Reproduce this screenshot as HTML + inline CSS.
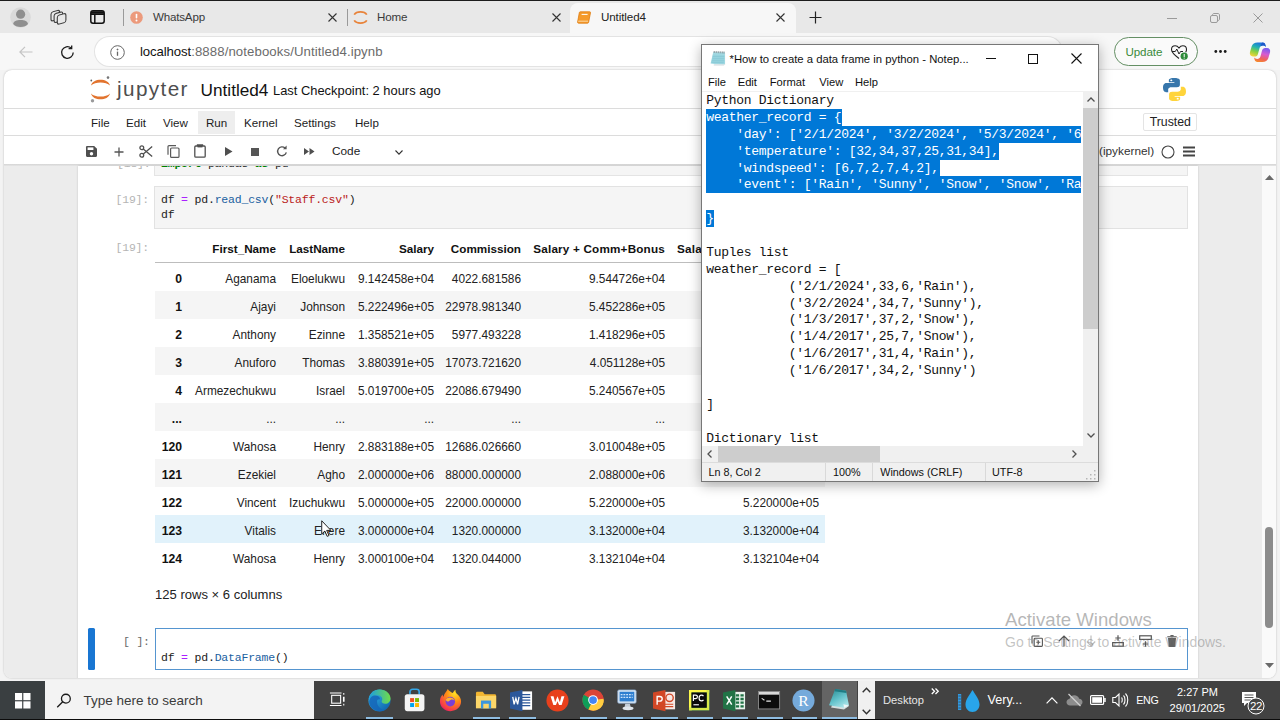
<!DOCTYPE html>
<html lang="en">
<head>
<meta charset="utf-8">
<title>Untitled4</title>
<style>
*{box-sizing:border-box;margin:0;padding:0}
html,body{width:1280px;height:720px;overflow:hidden;background:#f3f3f3;font-family:"Liberation Sans",sans-serif;color:#1a1a1a}
.abs,#root *{position:absolute}
#root{position:relative;width:1280px;height:720px;overflow:hidden}
#root span.t{white-space:nowrap;line-height:1}
#root svg{overflow:visible}
/* ---------- browser chrome ---------- */
#tabstrip{left:0;top:0;width:1280px;height:33px;background:#e8e8e8}
#topline{left:0;top:0;width:1280px;height:1px;background:#1c1c1c}
#navbar{left:0;top:33px;width:1280px;height:37px;background:#f7f7f7}
#acttab{left:570px;top:2.500px;width:226px;height:31.500px;background:#f7f7f7;border-radius:8px 8px 0 0}
#urlpill{left:95px;top:37px;width:755px;height:29px;background:#fff;border-radius:15px;box-shadow:0 0 0 1px #e3e3e3}
/* ---------- page ---------- */
#page{left:4px;top:70px;width:1272px;height:608px;background:#fff;border-radius:8px;overflow:hidden;box-shadow:0 0 2px rgba(0,0,0,.25)}
#root span.m{top:116.600px;font-size:11.600px;color:#1c1c1c}
#root span.c{font-family:"Liberation Mono",monospace;font-size:11.500px;letter-spacing:-.2px;color:#212121}
#root span.c b{position:static;font-weight:normal}
#root span.c b.o{color:#aa22ff}
#root span.c b.k{color:#212121}
#root span.c b.f{color:#2060a0}
#root span.c b.s{color:#ba2121}
#root span.c b.i{color:#008000;font-weight:bold}
#tbl{left:155px;top:0;width:670px;height:600px;font-size:11.850px;color:#222}
#tbl .r{left:0;width:670px;height:28px}
#tbl .r.g{background:#f5f5f5}
#tbl .r.hv{background:#e1f2fb}
#tbl .r.h{height:27px;font-weight:bold;color:#111;font-size:11.700px}
#tbl .r i{font-style:normal;white-space:nowrap;line-height:28px;top:1.500px}
#tbl .r.h i{top:-.5px}
#tbl .r i.x{right:643px;font-weight:bold;color:#111;font-size:12.200px}
#np{left:701px;top:44px;width:398px;height:438px}
#root span.n{top:33px;font-size:11.200px;color:#111}
#root span.st{top:423px;font-size:10.800px;color:#111}
#npt pre{left:4.300px;top:1px;font-family:"Liberation Mono",monospace;font-size:13px;letter-spacing:-.3px;line-height:16.870px;color:#111;white-space:pre}
#npt pre b{position:static;font-weight:normal;color:#fff}
#npt .sel{background:#0078d7}
#tb .ind{top:35.500px;height:2.500px;background:#8fbde2}
</style>
</head>
<body>
<div id="root">
<!--CHROME-->
<div id="tabstrip"></div>
<div id="navbar"></div>
<div id="topline"></div>
<div id="acttab"></div>
<!-- profile -->
<svg style="left:10px;top:7px" width="21" height="21" viewBox="0 0 21 21"><circle cx="10.500" cy="10.500" r="10.300" fill="#dadada"/><circle cx="10.600" cy="7.200" r="4.600" fill="#8f8f8f"/><path d="M3.200 17c.3-2.600 3.200-4 7.400-4s7.100 1.400 7.400 4c-1.400 1.900-4.200 3-7.400 3s-6-1.100-7.400-3z" fill="#8f8f8f"/></svg>
<!-- workspaces -->
<svg style="left:50px;top:8px" width="17" height="18" viewBox="0 0 17 18" fill="#e8e8e8" stroke="#3e3e3e" stroke-width="1.100"><g transform="skewY(-15)"><rect x="1" y="4.600" width="8.600" height="9" rx="2"/><rect x="4.100" y="7" width="8.600" height="9" rx="2"/><rect x="7.300" y="9.500" width="8.600" height="9" rx="2"/></g></svg>
<!-- tab actions -->
<svg style="left:90px;top:10px" width="15" height="14" viewBox="0 0 15 14" fill="none" stroke="#111" stroke-width="1.500"><rect x=".8" y=".8" width="13.400" height="12.400" rx="2.200"/><path d="M.8 4.200h13.400M4.800 4.200v9" /><path d="M1 2.500h13" stroke-width="2.600"/></svg>
<div style="left:123px;top:9px;width:1px;height:17px;background:#9a9a9a"></div>
<!-- whatsapp tab -->
<svg style="left:130px;top:11px" width="13" height="13" viewBox="0 0 13 13"><circle cx="6.500" cy="6.500" r="6.300" fill="#ec9a7c"/><rect x="5.700" y="2.800" width="1.600" height="4.800" rx=".8" fill="#fff"/><circle cx="6.500" cy="9.600" r="1" fill="#fff"/></svg>
<span class="t" style="left:153px;top:11px;font-size:11.600px;letter-spacing:-.2px;color:#3a3a3a">WhatsApp</span>
<svg style="left:328px;top:13px" width="9" height="9" viewBox="0 0 9 9" stroke="#333" stroke-width="1.100"><path d="M.5.500l8 8M8.500.500l-8 8"/></svg>
<div style="left:347px;top:9px;width:1px;height:17px;background:#9a9a9a"></div>
<!-- home tab -->
<svg style="left:353px;top:10px" width="15" height="15" viewBox="0 0 15 15" fill="none" stroke="#e8833a" stroke-width="1.700"><path d="M1.200 4.600c2.400-3.700 10.200-3.700 12.600 0"/><path d="M1.200 10.400c2.400 3.700 10.200 3.700 12.600 0"/></svg>
<span class="t" style="left:377px;top:11px;font-size:11.600px;letter-spacing:-.2px;color:#3a3a3a">Home</span>
<svg style="left:552px;top:13px" width="9" height="9" viewBox="0 0 9 9" stroke="#333" stroke-width="1.100"><path d="M.5.500l8 8M8.500.500l-8 8"/></svg>
<!-- active tab -->
<svg style="left:577px;top:11px" width="14" height="13" viewBox="0 0 14 13"><path d="M3.200.8h9.600c.5 0 .8.400.7.900l-1.900 9.600c-.1.500-.5.900-1 .9H1.500c-.6 0-1-.5-.9-1.100L2.300 1.700c.1-.5.400-.9.900-.9z" fill="#f59b2c" stroke="#e07c10" stroke-width=".8"/><path d="M4.600 3.400h6" stroke="#fff" stroke-width="1"/><path d="M1.200 10.200h9.800" stroke="#fbd9a8" stroke-width="1"/></svg>
<span class="t" style="left:601px;top:11px;font-size:11.600px;letter-spacing:-.1px;color:#222">Untitled4</span>
<svg style="left:776px;top:13px" width="9" height="9" viewBox="0 0 9 9" stroke="#333" stroke-width="1.100"><path d="M.5.500l8 8M8.500.500l-8 8"/></svg>
<svg style="left:809px;top:11px" width="13" height="13" viewBox="0 0 13 13" stroke="#222" stroke-width="1.200"><path d="M6.500.500v12M.5 6.500h12"/></svg>
<!-- window controls -->
<div style="left:1167px;top:18px;width:10px;height:1px;background:#9a9a9a"></div>
<svg style="left:1210px;top:13px" width="10" height="10" viewBox="0 0 10 10" fill="none" stroke="#9a9a9a" stroke-width="1"><rect x=".5" y="2.500" width="7" height="7" rx="1.500"/><path d="M2.500 2.500v-.5c0-.8.700-1.500 1.500-1.500h4c.8 0 1.500.7 1.500 1.500v4c0 .8-.7 1.500-1.500 1.500h-.5"/></svg>
<svg style="left:1253px;top:13px" width="10" height="10" viewBox="0 0 10 10" stroke="#9a9a9a" stroke-width="1"><path d="M.5.500l9 9M9.500.500l-9 9"/></svg>
<!-- nav bar -->
<svg style="left:19px;top:46px" width="14" height="12" viewBox="0 0 14 12" fill="none" stroke="#c4c4c4" stroke-width="1.200"><path d="M13.500 6H1M6 .8L.9 6 6 11.200"/></svg>
<svg style="left:60px;top:44.500px" width="15" height="15" viewBox="0 0 15 15" fill="none" stroke="#1b1b1b" stroke-width="1.300"><path d="M13.200 7.500a5.800 5.800 0 1 1-2-4.400"/><path d="M11.700.600v3h-3.100" /></svg>
<div id="urlpill" style="width:967px"></div>
<svg style="left:110px;top:45px" width="15" height="15" viewBox="0 0 15 15" fill="none" stroke="#666" stroke-width="1"><circle cx="7.500" cy="7.500" r="6.800"/><path d="M7.500 6.600v4.200" stroke-width="1.300"/><circle cx="7.500" cy="4.500" r=".5" fill="#666"/></svg>
<span class="t" style="left:140px;top:45px;font-size:13.200px;color:#6b6b6b;letter-spacing:.1px"><span style="position:static;color:#111;letter-spacing:-.1px">localhost</span>:8888/notebooks/Untitled4.ipynb</span>
<!-- update -->
<div style="left:1114px;top:37.200px;width:84px;height:29px;border:1.500px solid #648f64;border-radius:15px;background:#fafafa"></div>
<span class="t" style="left:1125.500px;top:46px;font-size:11.600px;letter-spacing:-.1px;color:#3a8a3a">Update</span>
<svg style="left:1170px;top:44px" width="19" height="17" viewBox="0 0 19 17" fill="none" stroke="#222" stroke-width="1.100"><path d="M9 14.500C5 11.500 1.500 8.800 1.500 5.500 1.500 3.300 3.200 1.800 5.200 1.800c1.500 0 2.800.8 3.800 2.200 1-1.400 2.300-2.200 3.800-2.200 2 0 3.700 1.500 3.700 3.700 0 1-.3 1.900-.8 2.800"/><path d="M2 7.500h3.300l1.500-2.500 2.200 5 1.500-2.500h2.500" stroke-width="1"/><circle cx="14.200" cy="12.200" r="3.600" fill="#2e8b3a" stroke="none"/><rect x="13.700" y="10" width="1" height="3" fill="#fff" stroke="none"/><rect x="13.700" y="13.600" width="1" height="1" fill="#fff" stroke="none"/></svg>
<svg style="left:1213.500px;top:50px" width="13" height="3" viewBox="0 0 13 3"><circle cx="1.800" cy="1.500" r="1.400" fill="#1a1a1a"/><circle cx="6.500" cy="1.500" r="1.400" fill="#1a1a1a"/><circle cx="11.200" cy="1.500" r="1.400" fill="#1a1a1a"/></svg>
<!-- copilot -->
<svg style="left:1248.500px;top:41.500px" width="22" height="20.500" viewBox="0 0 22 21"><defs><linearGradient id="cpa" x1=".6" y1="0" x2=".2" y2="1"><stop offset="0" stop-color="#1f6fe0"/><stop offset=".35" stop-color="#22b3b0"/><stop offset=".65" stop-color="#86d044"/><stop offset="1" stop-color="#f9d43a"/></linearGradient><linearGradient id="cpb" x1=".6" y1="0" x2=".3" y2="1"><stop offset="0" stop-color="#7a5cf0"/><stop offset=".4" stop-color="#d85ad0"/><stop offset=".75" stop-color="#f0625a"/><stop offset="1" stop-color="#f48a2c"/></linearGradient></defs>
<path d="M8.500.500h5.200c1.500 0 2.400.8 2.800 2.200l.6 2.300c-.9-.9-2-1.300-3.200-1.300-1.800 0-2.900 1-3.400 2.800l-1.600 5.700c-.5 1.800-1.600 2.700-3.200 2.700H3.800c-2.300 0-3.700-2-3.100-4.300l1.800-6.300C3.300 1.900 5.400.500 8.500.500z" fill="url(#cpa)"/>
<path d="M13.500 20.500H8.300c-1.500 0-2.400-.8-2.800-2.200l-.6-2.300c.9.900 2 1.300 3.200 1.300 1.800 0 2.900-1 3.400-2.800l1.600-5.700c.5-1.800 1.600-2.700 3.200-2.700h1.900c2.300 0 3.700 2 3.100 4.300l-1.800 6.300c-.8 2.400-2.900 3.800-6 3.800z" fill="url(#cpb)"/>
<path d="M13.500.500c1.500 0 2.500.8 2.900 2.200l.7 2.400c-1-1-2-1.400-3.200-1.400-.9 0-1.700.3-2.300.8.400-2 1-3.200 1.900-4z" fill="#1d57c8"/>
</svg>

<!--PAGE-->
<div id="page"><div id="pg" style="left:-4px;top:-70px;width:1280px;height:720px">
<!-- header -->
<svg style="left:90px;top:76px" width="21" height="27" viewBox="0 0 21 27"><path d="M1 9.600C2.600 1.800 18.400 1.800 20 9.600 16 5.400 5 5.400 1 9.600z" fill="#e2742f"/><path d="M1 17.400C2.600 25.200 18.400 25.200 20 17.400 16 21.600 5 21.600 1 17.400z" fill="#e2742f"/><circle cx="18" cy="1.600" r="1.300" fill="#767677"/><circle cx="2.500" cy="24.800" r="1.700" fill="#9a9a9b"/><circle cx="1.300" cy="4.500" r=".9" fill="#616262"/></svg>
<span class="t" style="left:117px;top:78.500px;font-size:20.700px;color:#4e4e4e;letter-spacing:1.400px">jupyter</span>
<span class="t" style="left:200.600px;top:81.500px;font-size:17.200px;color:#111">Untitled4</span>
<span class="t" style="left:273px;top:84.800px;font-size:12.900px;color:#111">Last Checkpoint: 2 hours ago</span>
<svg style="left:1163.300px;top:78.200px" width="23" height="23" viewBox="3.500 1.500 20 24" preserveAspectRatio="none"><path d="M13.300 1.500c-5 0-4.700 2.200-4.700 2.200v2.300h4.800v.7H6.700S3.500 6.300 3.500 11.400s2.800 4.900 2.800 4.900h1.700v-2.400s-.1-2.800 2.800-2.800h4.700s2.700 0 2.700-2.600V4.200s.4-2.700-4.900-2.700zm-2.600 1.500a.9.900 0 1 1 0 1.800.9.900 0 0 1 0-1.800z" fill="#3776ab"/><path d="M13.700 25.500c5 0 4.700-2.200 4.700-2.200V21h-4.800v-.7h6.700s3.200.4 3.200-4.700-2.800-4.900-2.800-4.900H19v2.400s.1 2.800-2.800 2.800h-4.700s-2.700 0-2.700 2.600v4.300s-.4 2.700 4.900 2.700zm2.600-1.500a.9.900 0 1 1 0-1.800.9.900 0 0 1 0 1.800z" fill="#ffd43b"/></svg>
<div style="left:4px;top:108px;width:1272px;height:1px;background:#dcdcdc"></div>
<!-- menu -->
<div style="left:198px;top:110.500px;width:37px;height:23px;background:#eeeeee"></div>
<span class="t m" style="left:91px">File</span>
<span class="t m" style="left:126px">Edit</span>
<span class="t m" style="left:163px">View</span>
<span class="t m" style="left:206px">Run</span>
<span class="t m" style="left:244px">Kernel</span>
<span class="t m" style="left:294px">Settings</span>
<span class="t m" style="left:355px">Help</span>
<div style="left:1143px;top:113px;width:54px;height:18px;border:1px solid #e4e4e4;border-radius:2px;background:#fff"></div>
<span class="t" style="left:1149.700px;top:116px;font-size:12.300px;color:#222">Trusted</span>
<div style="left:4px;top:135px;width:1272px;height:1px;background:#dcdcdc"></div>
<!-- toolbar -->
<svg style="left:86px;top:146px" width="11" height="11" viewBox="0 0 11 11"><path d="M1.200 0h7L11 2.800v7c0 .7-.5 1.200-1.200 1.200H1.200C.5 11 0 10.500 0 9.800V1.200C0 .5.500 0 1.200 0z" fill="#4f4f4f"/><rect x="1.600" y="1.400" width="5.800" height="2.600" fill="#fff"/><circle cx="5.500" cy="7.700" r="1.700" fill="#fff"/></svg>
<svg style="left:114px;top:147px" width="10" height="10" viewBox="0 0 10 10" stroke="#555" stroke-width="1.300"><path d="M5 .5v9M.5 5h9"/></svg>
<svg style="left:139px;top:145px" width="14" height="13" viewBox="0 0 14 13" fill="none" stroke="#4f4f4f" stroke-width="1.300"><circle cx="2.800" cy="2.800" r="1.900"/><circle cx="2.800" cy="10.200" r="1.900"/><path d="M4.300 4l8.900 7.600M4.300 9l8.900-7.600"/></svg>
<svg style="left:167px;top:145px" width="13" height="13" viewBox="0 0 13 13" fill="none" stroke="#5a5a5a" stroke-width="1.200"><rect x="3.600" y="3" width="8.400" height="9.400" rx="1"/><path d="M1 9.800V1.600c0-.5.400-1 1-1h7"/></svg>
<svg style="left:194px;top:144px" width="12" height="14" viewBox="0 0 12 14" fill="none" stroke="#4f4f4f" stroke-width="1.300"><rect x=".8" y="2" width="10.400" height="11.200" rx="1"/><path d="M3.500 2V.8h5V2" /><rect x="3.500" y="1" width="5" height="2.400" fill="#4f4f4f" stroke="none"/></svg>
<svg style="left:225px;top:147px" width="8" height="9" viewBox="0 0 8 9"><path d="M0 0l7.500 4.500L0 9z" fill="#4f4f4f"/></svg>
<div style="left:251px;top:147.500px;width:8px;height:8px;background:#555"></div>
<svg style="left:276px;top:145px" width="12" height="12" viewBox="0 0 12 12" fill="none" stroke="#555" stroke-width="1.400"><path d="M10.300 7.400A4.400 4.400 0 1 1 9 3"/><path d="M10.600.6v3.600H7z" fill="#555" stroke="none"/></svg>
<svg style="left:304px;top:148px" width="11" height="7" viewBox="0 0 11 7"><path d="M0 0l5 3.500L0 7zM5.500 0l5 3.500-5 3.500z" fill="#4f4f4f"/></svg>
<span class="t" style="left:332px;top:145.500px;font-size:11.800px;color:#1c1c1c">Code</span>
<svg style="left:395px;top:149.500px" width="8" height="5" viewBox="0 0 8 5" fill="none" stroke="#333" stroke-width="1.100"><path d="M.5.500L4 4.200 7.500.500"/></svg>
<span class="t" style="left:1099px;top:145.500px;font-size:11.800px;color:#333">(ipykernel)</span>
<svg style="left:1160.700px;top:144.500px" width="14" height="14" viewBox="0 0 14 14" fill="none" stroke="#444" stroke-width="1.100"><circle cx="7" cy="7" r="6"/></svg>
<svg style="left:1183px;top:146px" width="12" height="11" viewBox="0 0 12 11" stroke="#444" stroke-width="1.800"><path d="M0 1.500h12M0 5.500h12M0 9.500h12"/></svg>

<div style="left:4px;top:164px;width:1272px;height:2px;background:linear-gradient(#d4d4d4,#e6e6e6)"></div>
<!-- notebook bg -->
<div style="left:4px;top:166px;width:1272px;height:516px;background:#ececec"></div>
<div style="left:77.500px;top:166px;width:1120px;height:516px;background:#fff;box-shadow:0 0 2px rgba(0,0,0,.18)"></div>
<div style="left:0;top:166px;width:1262px;height:512px;overflow:hidden"><div style="left:0;top:-166px;width:1280px;height:720px">
<!-- cell 18 (partially hidden) -->
<div style="left:154px;top:150px;width:1034px;height:26px;background:#f5f5f5;border:1px solid #e4e4e4"></div>
<span class="t c" style="left:117px;top:158px;color:#b5b5b5">[18]:</span>
<span class="t c" style="left:161px;top:158px"><b class="i">import</b> pandas <b class="i">as</b> pd</span>
<!-- cell 19 input -->
<div style="left:154px;top:186px;width:1034px;height:42.500px;background:#f5f5f5;border:1px solid #e2e2e2"></div>
<span class="t c" style="left:115.500px;top:194px;color:#b5b5b5">[19]:</span>
<span class="t c" style="left:161px;top:193.500px">df <b class="o">=</b> pd<b class="k">.</b><b class="f">read_csv</b>(<b class="s">"Staff.csv"</b>)</span>
<span class="t c" style="left:161px;top:209.400px">df</span>
<span class="t c" style="left:115.500px;top:242px;color:#b5b5b5">[19]:</span>
<!-- table -->
<div id="tbl">
<div class="r h" style="top:235px"><i style="right:549px">First_Name</i><i style="right:480px">LastName</i><i style="right:391px">Salary</i><i style="right:304px">Commission</i><i style="right:160px;letter-spacing:.2px">Salary + Comm+Bonus</i><i style="right:6px;letter-spacing:.2px">Salary + Comm+Bonus.1</i></div>
<div style="left:0;top:262px;width:670px;height:1px;background:#bdbdbd"></div>
<div class="r" style="top:263px"><i class="x">0</i><i style="right:549px">Aganama</i><i style="right:480px">Eloelukwu</i><i style="right:391px">9.142458e+04</i><i style="right:304px">4022.681586</i><i style="right:160px">9.544726e+04</i><i style="right:6px">9.544726e+04</i></div>
<div class="r g" style="top:291px"><i class="x">1</i><i style="right:549px">Ajayi</i><i style="right:480px">Johnson</i><i style="right:391px">5.222496e+05</i><i style="right:304px">22978.981340</i><i style="right:160px">5.452286e+05</i><i style="right:6px">5.452286e+05</i></div>
<div class="r" style="top:319px"><i class="x">2</i><i style="right:549px">Anthony</i><i style="right:480px">Ezinne</i><i style="right:391px">1.358521e+05</i><i style="right:304px">5977.493228</i><i style="right:160px">1.418296e+05</i><i style="right:6px">1.418296e+05</i></div>
<div class="r g" style="top:347px"><i class="x">3</i><i style="right:549px">Anuforo</i><i style="right:480px">Thomas</i><i style="right:391px">3.880391e+05</i><i style="right:304px">17073.721620</i><i style="right:160px">4.051128e+05</i><i style="right:6px">4.051128e+05</i></div>
<div class="r" style="top:375px"><i class="x">4</i><i style="right:549px">Armezechukwu</i><i style="right:480px">Israel</i><i style="right:391px">5.019700e+05</i><i style="right:304px">22086.679490</i><i style="right:160px">5.240567e+05</i><i style="right:6px">5.240567e+05</i></div>
<div class="r g" style="top:403px"><i class="x">...</i><i style="right:549px">...</i><i style="right:480px">...</i><i style="right:391px">...</i><i style="right:304px">...</i><i style="right:160px">...</i><i style="right:6px">...</i></div>
<div class="r" style="top:431px"><i class="x">120</i><i style="right:549px">Wahosa</i><i style="right:480px">Henry</i><i style="right:391px">2.883188e+05</i><i style="right:304px">12686.026660</i><i style="right:160px">3.010048e+05</i><i style="right:6px">3.010048e+05</i></div>
<div class="r g" style="top:459px"><i class="x">121</i><i style="right:549px">Ezekiel</i><i style="right:480px">Agho</i><i style="right:391px">2.000000e+06</i><i style="right:304px">88000.000000</i><i style="right:160px">2.088000e+06</i><i style="right:6px">2.088000e+06</i></div>
<div class="r" style="top:487px"><i class="x">122</i><i style="right:549px">Vincent</i><i style="right:480px">Izuchukwu</i><i style="right:391px">5.000000e+05</i><i style="right:304px">22000.000000</i><i style="right:160px">5.220000e+05</i><i style="right:6px">5.220000e+05</i></div>
<div class="r hv" style="top:515px"><i class="x">123</i><i style="right:549px">Vitalis</i><i style="right:480px">Ekere</i><i style="right:391px">3.000000e+04</i><i style="right:304px">1320.000000</i><i style="right:160px">3.132000e+04</i><i style="right:6px">3.132000e+04</i></div>
<div class="r" style="top:543px"><i class="x">124</i><i style="right:549px">Wahosa</i><i style="right:480px">Henry</i><i style="right:391px">3.000100e+04</i><i style="right:304px">1320.044000</i><i style="right:160px">3.132104e+04</i><i style="right:6px">3.132104e+04</i></div>
</div>
<span class="t" style="left:155px;top:588px;font-size:13.050px;color:#222">125 rows × 6 columns</span>
<!-- active cell -->
<div style="left:87.500px;top:627.500px;width:7px;height:42.500px;background:#1976d2;border-radius:1.500px"></div>
<div style="left:155px;top:628px;width:1033px;height:42px;background:#fff;border:1px solid #5595d0"></div>
<span class="t c" style="left:123px;top:636px;color:#6a6a6a">[ ]:</span>
<span class="t c" style="left:161px;top:652px">df <b class="o">=</b> pd<b class="k">.</b><b class="f">DataFrame</b>()</span>
<!-- cell toolbar icons -->
<svg style="left:1030.500px;top:635px" width="12" height="12" viewBox="0 0 12 12" fill="none" stroke="#555" stroke-width="1.100"><rect x="3.200" y="3.200" width="8.200" height="8.200" rx=".8"/><path d="M1 8.500V1.600c0-.4.300-.6.600-.6h6.900"/><path d="M7.300 5.300v4M5.300 7.300h4"/></svg>
<svg style="left:1058px;top:635px" width="12" height="12" viewBox="0 0 12 12" fill="none" stroke="#555" stroke-width="1.200"><path d="M6 11.500V1.200M1 6l5-5 5 5"/></svg>
<svg style="left:1086px;top:635px" width="10" height="12" viewBox="0 0 10 12" fill="none" stroke="#bdbdbd" stroke-width="1.200"><path d="M5 .5v10.300M.8 6.500L5 10.800 9.200 6.500"/></svg>
<svg style="left:1112px;top:635px" width="12" height="12" viewBox="0 0 12 12" fill="none" stroke="#555" stroke-width="1.200"><rect x=".7" y="7.600" width="10.600" height="3.600"/><path d="M6 .3v5.500M3.300 3h5.400"/></svg>
<svg style="left:1138.500px;top:635px" width="13" height="12" viewBox="0 0 13 12" fill="none" stroke="#555" stroke-width="1.200"><rect x=".7" y=".8" width="11.600" height="3.600"/><path d="M6.500 6.200v5.500M3.800 9h5.400"/></svg>
<svg style="left:1167px;top:635px" width="10" height="12" viewBox="0 0 10 12"><path d="M1 3h8l-.7 8.300c0 .4-.4.700-.8.700h-5c-.4 0-.8-.3-.8-.7z" fill="#616161"/><path d="M.3 1.200h9.400v1.200H.3z" fill="#616161"/><rect x="3.400" y="0" width="3.200" height="1.400" fill="#616161"/></svg>

<!-- watermark -->
<span class="t" style="left:1005px;top:610.500px;font-size:18.600px;color:rgba(110,110,110,.5)">Activate Windows</span>
<span class="t" style="left:1005px;top:634.500px;font-size:14px;color:rgba(110,110,110,.42)">Go to Settings to activate Windows.</span>
<!-- cursor -->
<svg style="left:321px;top:520px" width="11" height="17.500" viewBox="0 0 12 19"><path d="M.8.800v14.400l3.400-3.200 2.500 5.800 2-.9-2.500-5.600h4.600z" fill="#fff" stroke="#111" stroke-width="1"/></svg>

</div></div>
<!-- scrollbar -->
<div style="left:1262px;top:166px;width:14px;height:516px;background:#fafafa"></div>
<svg style="left:1265px;top:175px" width="9" height="5" viewBox="0 0 9 5"><path d="M0 5L4.500 0 9 5z" fill="#6a6a6a"/></svg>
<svg style="left:1265px;top:663px" width="9" height="5" viewBox="0 0 9 5"><path d="M0 0L4.500 5 9 0z" fill="#6a6a6a"/></svg>
<div style="left:1265px;top:527px;width:8px;height:101px;background:#8c8c8c;border-radius:4px"></div>
</div></div>

<!--NOTEPAD-->
<div id="np">
<div id="npw" style="left:0;top:0;width:398px;height:438px;background:#fff;border:1px solid #777;box-shadow:0 3px 12px rgba(0,0,0,.3)"></div>
<!-- title -->
<svg style="left:8.500px;top:6px" width="16" height="16" viewBox="0 0 16 16"><path d="M3.600 15.700h10.200l1.300-1.500V3L4.100 14.200z" fill="#dfe6e8"/><path d="M3.200 2.200l11.700.4.100 11.300-1.500.3-9.200-.2L.600 13.500z" fill="#a3dae3"/><path d="M3 4.500l-1.700 8.300 11.500.8 1.600-.3V5z" fill="#8ecfdb" opacity=".6"/><path d="M2.800 6.500h11.500M2.400 8.600h11.900M2 10.700h12.300M1.600 12.600h12" stroke="#7fc3d0" stroke-width=".5"/><path d="M4.200 1v2M6.200 1.100v2M8.200 1.200v2M10.200 1.300v2M12.200 1.400v2M14 1.500v2" stroke="#6f7f86" stroke-width=".9"/></svg>
<span class="t" style="left:28.500px;top:10px;font-size:11.300px;color:#111">*How to create a data frame in python - Notep...</span>
<div style="left:285px;top:14px;width:10px;height:1px;background:#111"></div>
<div style="left:327px;top:10px;width:10px;height:10px;border:1px solid #111"></div>
<svg style="left:370px;top:9px" width="11" height="11" viewBox="0 0 11 11" stroke="#111" stroke-width="1.100"><path d="M.5.500l10 10M10.500.500l-10 10"/></svg>
<!-- menu -->
<span class="t n" style="left:7px">File</span>
<span class="t n" style="left:36.700px">Edit</span>
<span class="t n" style="left:68.700px">Format</span>
<span class="t n" style="left:118.300px">View</span>
<span class="t n" style="left:154px">Help</span>
<!-- text area -->
<div style="left:1px;top:47px;width:396px;height:1px;background:#f0f0f0"></div>
<div id="npt" style="left:1px;top:48px;width:381px;height:354px;overflow:hidden">
<div class="sel" style="left:4.300px;top:16.67px;width:135.7px;height:17.17px"></div>
<div class="sel" style="left:4.300px;top:33.54px;width:375px;height:17.17px"></div>
<div class="sel" style="left:4.300px;top:50.41px;width:292.5px;height:17.17px"></div>
<div class="sel" style="left:4.300px;top:67.28px;width:233.3px;height:17.17px"></div>
<div class="sel" style="left:4.300px;top:84.15px;width:375px;height:17.17px"></div>
<div class="sel" style="left:4.300px;top:117.89px;width:8px;height:17.17px"></div>
<pre>Python Dictionary
<b>weather_record = {
    'day': ['2/1/2024', '3/2/2024', '5/3/2024', '6/3/2024'],
    'temperature': [32,34,37,25,31,34],
    'windspeed': [6,7,2,7,4,2],
    'event': ['Rain', 'Sunny', 'Snow', 'Snow', 'Rain', 'Sunny']

}</b>

Tuples list
weather_record = [
           ('2/1/2024',33,6,'Rain'),
           ('3/2/2024',34,7,'Sunny'),
           ('1/3/2017',37,2,'Snow'),
           ('1/4/2017',25,7,'Snow'),
           ('1/6/2017',31,4,'Rain'),
           ('1/6/2017',34,2,'Sunny')

]

Dictionary list
weather_record = [</pre>
</div>
<!-- v scrollbar -->
<div style="left:382px;top:48px;width:15px;height:354px;background:#f0f0f0"></div>
<div style="left:382px;top:64px;width:15px;height:221px;background:#cdcdcd"></div>
<svg style="left:385.500px;top:53px" width="8" height="5" viewBox="0 0 8 5" fill="none" stroke="#505050" stroke-width="1.300"><path d="M.5 4.500L4 1l3.500 3.500"/></svg>
<svg style="left:385.500px;top:389px" width="8" height="5" viewBox="0 0 8 5" fill="none" stroke="#505050" stroke-width="1.300"><path d="M.5.500L4 4l3.500-3.500"/></svg>
<!-- h scrollbar -->
<div style="left:1px;top:402px;width:396px;height:16px;background:#f0f0f0"></div>
<div style="left:17px;top:402px;width:162px;height:16px;background:#cdcdcd"></div>
<svg style="left:6px;top:406px" width="5" height="8" viewBox="0 0 5 8" fill="none" stroke="#505050" stroke-width="1.300"><path d="M4.500.500L1 4l3.500 3.500"/></svg>
<svg style="left:371px;top:406px" width="5" height="8" viewBox="0 0 5 8" fill="none" stroke="#505050" stroke-width="1.300"><path d="M.5.500L4 4 .5 7.500"/></svg>
<!-- status -->
<div style="left:1px;top:418px;width:396px;height:19px;background:#f0f0f0;border-top:1px solid #dcdcdc"></div>
<div style="left:124px;top:419px;width:1px;height:18px;background:#d9d9d9"></div>
<div style="left:171px;top:419px;width:1px;height:18px;background:#d9d9d9"></div>
<div style="left:284px;top:419px;width:1px;height:18px;background:#d9d9d9"></div>
<span class="t st" style="left:7.600px">Ln 8, Col 2</span>
<span class="t st" style="left:132px">100%</span>
<span class="t st" style="left:179.200px">Windows (CRLF)</span>
<span class="t st" style="left:291px">UTF-8</span>
<svg style="left:385px;top:426px" width="10" height="10" viewBox="0 0 10 10" fill="#b5b5b5"><rect x="8" y="0" width="1.500" height="1.500"/><rect x="8" y="4" width="1.500" height="1.500"/><rect x="4" y="4" width="1.500" height="1.500"/><rect x="8" y="8" width="1.500" height="1.500"/><rect x="4" y="8" width="1.500" height="1.500"/><rect x="0" y="8" width="1.500" height="1.500"/></svg>
</div>

<!--TASKBAR-->
<div id="tb" style="left:0;top:681px;width:1280px;height:39px;background:#424242">
<div style="left:0;top:38px;width:1280px;height:1px;background:#0c0c0c;z-index:5"></div>
<div style="left:0;top:0;width:45px;height:39px;background:#3a3f41"></div>
<svg style="left:15px;top:11.500px" width="15.500" height="15.500" viewBox="0 0 16 16" fill="#fff"><rect x="0" y="0" width="7.400" height="7.400"/><rect x="8.600" y="0" width="7.400" height="7.400"/><rect x="0" y="8.600" width="7.400" height="7.400"/><rect x="8.600" y="8.600" width="7.400" height="7.400"/></svg>
<div style="left:45px;top:0;width:269px;height:38px;background:#f3f3f3"></div>
<svg style="left:56px;top:12px" width="16" height="15" viewBox="0 0 16 16" fill="none" stroke="#1a1a1a" stroke-width="1.400"><circle cx="10" cy="6" r="4.700"/><path d="M6.600 9.400L.8 15.200"/></svg>
<span class="t" style="left:83.500px;top:12.500px;font-size:13.500px;color:#3b3b3b">Type here to search</span>
<!-- task view -->
<svg style="left:328.500px;top:11px" width="17" height="14.500" viewBox="0 0 19 16" fill="none" stroke="#fff" stroke-width="1.200"><rect x="3" y="3.600" width="10" height="8.800"/><path d="M1 1h13M1 15h13M16.500 1v2M16.500 13v2"/><rect x="15.600" y="5.200" width="1.800" height="5.600" fill="#fff" stroke="none"/></svg>
<!-- edge -->
<svg style="left:368.0px;top:8.0px" width="23.0" height="23.0" viewBox="0 0 25 25"><defs><linearGradient id="eg1" x1="0" y1="0" x2="1" y2="1"><stop offset="0" stop-color="#35c1f1"/><stop offset="1" stop-color="#0c59a4"/></linearGradient><linearGradient id="eg2" x1="0" y1="0" x2="1" y2="0"><stop offset="0" stop-color="#1b9de2"/><stop offset="1" stop-color="#6fdc4a"/></linearGradient></defs><circle cx="12.500" cy="12.500" r="12" fill="url(#eg1)"/><path d="M.8 11C2 4.500 7 .5 12.800.5c6.500 0 11.700 4.500 11.700 9.800 0 3.500-2.700 5.700-5.700 5.700-2.600 0-4-1.200-4-2.400 0-.8.700-1.200.7-2.600 0-2.300-2.200-4.200-5-4.200-3.800 0-7.700 2.200-9.700 4.200z" fill="url(#eg2)"/><path d="M9.800 13.500c0 4.500 3.200 8.500 8.200 9.300-6 3.200-13.500.2-16-5.300-2-4.500.5-9.500 4.500-10.300 3.500-.7 6.600 1.400 6.600 4-1.700-.6-3.300.3-3.300 2.300z" fill="#1565b8" opacity=".85"/></svg>
<!-- store -->
<svg style="left:403.9px;top:7.1px" width="21.2" height="24.8" viewBox="0 0 23 27"><path d="M6.500 7V4.200c0-1.600 1.200-2.800 2.800-2.800h4.400c1.600 0 2.800 1.200 2.800 2.800V7" fill="none" stroke="#35a7e8" stroke-width="1.800"/><rect x=".8" y="6.800" width="21.400" height="18.400" rx="2.800" fill="#f4f4f4"/><rect x="6.600" y="11" width="4.300" height="4.300" fill="#f25022"/><rect x="12" y="11" width="4.300" height="4.300" fill="#7fba00"/><rect x="6.600" y="16.400" width="4.300" height="4.300" fill="#00a4ef"/><rect x="12" y="16.400" width="4.300" height="4.300" fill="#ffb900"/></svg>
<!-- firefox -->
<svg style="left:439.0px;top:7.0px" width="23.0" height="23.9" viewBox="0 0 25 26"><defs><radialGradient id="ff1" cx=".7" cy=".2" r="1"><stop offset="0" stop-color="#ffe226"/><stop offset=".4" stop-color="#ff8a16"/><stop offset=".8" stop-color="#f4364d"/><stop offset="1" stop-color="#c60084"/></radialGradient></defs><path d="M12.500 25.200C6 25.200 1 20.400 1 14.300c0-3.400 1.400-5.800 3-7.300 0 1.200.4 2 .9 2.500C5.500 6 8 4 9.500 1c1.500 2.500 4 3.500 5.500 4.500.5-1.500 1.800-3 3-3.700-.4 2 .4 3.500 2.300 5.400 2.300 2.300 3.700 4.400 3.700 7.600 0 6-5 10.400-11.500 10.400z" fill="url(#ff1)"/><circle cx="12.300" cy="14.800" r="5.200" fill="#7a3fd6"/><path d="M7.500 12.500c1.500-2.300 4.500-3 7-1.500 1.300.8 2 1.800 2.300 2.800-1.300-1.300-3-1.400-4.300-.8-1.400.6-1.700 1.800-3.100 1.700-1 0-1.700-.9-1.900-2.200z" fill="#ffb52e"/></svg>
<!-- explorer -->
<svg style="left:475.0px;top:8.9px" width="22.1" height="20.2" viewBox="0 0 24 22"><path d="M1 3.500C1 2.700 1.600 2 2.500 2h6l2 2.500H21.500c.8 0 1.500.7 1.500 1.500v13H1z" fill="#f3b631"/><rect x="1" y="6.500" width="22" height="13.500" fill="#fcd669"/><rect x="6.500" y="11.500" width="11" height="8.500" fill="#3c97de"/><rect x="9" y="15" width="6" height="5" fill="#fcd669"/></svg>
<!-- word -->
<svg style="left:510.0px;top:8.9px" width="23.0" height="21.2" viewBox="0 0 25 23"><rect x="10" y="1.500" width="14" height="20" fill="#fff"/><path d="M12 5h10M12 8h10M12 11h10M12 14h10M12 17h10" stroke="#2b579a" stroke-width="1.300"/><path d="M0 2.800L13.500 0v23L0 20.200z" fill="#2b579a"/><path d="M3 7.500l1.500 8 1.900-6.500 1.900 6.500 1.500-8" fill="none" stroke="#fff" stroke-width="1.400"/></svg>
<!-- wps -->
<svg style="left:546.0px;top:8.0px" width="23.0" height="23.0" viewBox="0 0 25 25"><circle cx="12.500" cy="12.500" r="12" fill="#e8401c"/><path d="M5 8h3.200l1.700 6.500 2.600-6.500 2.600 6.500L16.800 8H20l-3 9.500h-2.800l-1.700-4.300-1.700 4.300H8z" fill="#fff"/></svg>
<!-- chrome -->
<svg style="left:582.0px;top:8.0px" width="22.1" height="22.1" viewBox="0 0 24 24"><circle cx="12" cy="12" r="11.500" fill="#db4437"/><path d="M12 12L2 6.300A11.500 11.500 0 0 0 7 22.400z" fill="#0f9d58"/><path d="M12 12l-5 10.400A11.500 11.500 0 0 0 23.500 12z" fill="#ffcd40"/><path d="M12 12h11.500A11.500 11.500 0 0 0 17 1.700z" fill="#db4437"/><path d="M12 12l5 10.300A11.500 11.500 0 0 0 23.400 10.500z" fill="#ffcd40"/><circle cx="12" cy="12" r="5.300" fill="#fff"/><circle cx="12" cy="12" r="4.200" fill="#4285f4"/></svg>
<!-- remote -->
<svg style="left:617.0px;top:8.0px" width="23.0" height="23.0" viewBox="0 0 25 25"><rect x=".8" y="1" width="20" height="14.500" rx="1.500" fill="#dbe9f7" stroke="#8aa7c7" stroke-width=".8"/><rect x="2.800" y="3" width="16" height="10.500" fill="#2f7fd0"/><path d="M4 6h13M4 9h13" stroke="#cfe4fa" stroke-width="1.400" stroke-dasharray="2 1"/><path d="M9 16h5l1 4h-7z" fill="#c3cdd8"/><ellipse cx="12" cy="21" rx="6" ry="2" fill="#dfe5ec"/></svg>
<!-- ppt -->
<svg style="left:653.0px;top:8.9px" width="23.0" height="21.2" viewBox="0 0 25 23"><rect x="10" y="2" width="14" height="19" fill="#f7e8e4"/><circle cx="18" cy="8.500" r="4" fill="none" stroke="#d24726" stroke-width="1.500"/><path d="M13 15.500h9M13 18h9" stroke="#d24726" stroke-width="1.200"/><path d="M0 2.800L13.500 0v23L0 20.200z" fill="#d24726"/><path d="M4.500 16V7h2.800c1.800 0 2.700 1 2.700 2.500s-1 2.600-2.700 2.600H4.800" fill="none" stroke="#fff" stroke-width="1.500"/></svg>
<!-- pycharm -->
<svg style="left:688.9px;top:8.9px" width="20.2" height="20.2" viewBox="0 0 22 22"><rect x="0" y="0" width="22" height="22" fill="#21d789"/><path d="M0 0h22v3H3v19H0z" fill="#fcf84a"/><path d="M22 22H0v-3h19V0h3z" fill="#d7e84a"/><rect x="2.600" y="2.600" width="16.800" height="16.800" fill="#0b0b0b"/><path d="M4.800 12V5.500h2.400c1.300 0 2 .8 2 1.900s-.8 2-2.100 2H5" fill="none" stroke="#fff" stroke-width="1.300"/><path d="M15.800 6.600c-.5-.7-1.200-1.100-2.100-1.100-1.600 0-2.700 1.300-2.700 3.200s1.100 3.200 2.700 3.200c.9 0 1.600-.4 2.100-1.100" fill="none" stroke="#fff" stroke-width="1.300"/><rect x="4.800" y="15.500" width="6" height="1.200" fill="#fff"/></svg>
<!-- excel -->
<svg style="left:723.0px;top:8.9px" width="23.0" height="21.2" viewBox="0 0 25 23"><rect x="10" y="2" width="14" height="19" fill="#e9f3ec"/><path d="M14 4.500h3.500v2.500H14zM19 4.500h3.500v2.500H19zM14 8.500h3.500V11H14zM19 8.500h3.500V11H19zM14 12.500h3.500V15H14zM19 12.500h3.500V15H19zM14 16.500h3.500V19H14zM19 16.500h3.500V19H19z" fill="#217346"/><path d="M0 2.800L13.500 0v23L0 20.200z" fill="#217346"/><path d="M4 7l5.500 9M9.500 7L4 16" stroke="#fff" stroke-width="1.600"/></svg>
<!-- cmd -->
<svg style="left:758.0px;top:9.8px" width="22.1" height="18.4" viewBox="0 0 24 20"><rect x=".5" y=".5" width="23" height="19" fill="#0c0c0c" stroke="#8a8a8a" stroke-width="1"/><rect x="1" y="1" width="22" height="3" fill="#d8d8d8"/><path d="M4 8l3 2M9 11h5" stroke="#e8e8e8" stroke-width="1.200"/></svg>
<!-- R -->
<svg style="left:792.0px;top:8.0px" width="23.0" height="23.0" viewBox="0 0 25 25"><circle cx="12.500" cy="12.500" r="12" fill="#75aadb"/><text x="12.500" y="18.500" font-family="Liberation Serif,serif" font-size="17" fill="#fff" text-anchor="middle">R</text></svg>
<!-- notepad active -->
<div style="left:822px;top:0;width:35px;height:39px;background:#646464"></div>
<svg style="left:827.500px;top:7px" width="22" height="22" viewBox="0 0 22 22"><defs><linearGradient id="npg" x1=".2" y1="0" x2=".8" y2="1"><stop offset="0" stop-color="#2d9198"/><stop offset=".5" stop-color="#63c2cb"/><stop offset="1" stop-color="#b4e9ee"/></linearGradient></defs><path d="M3 19.500l13 2 5-3.500-16.500-1.500z" fill="#d5dfe0"/><path d="M7.200 1L18 2.800l3 14.700-4.800 2.300L1 17.200z" fill="url(#npg)"/><path d="M7.200 1L18 2.800l.5 2.200L6.600 3.200z" fill="#1f7c84"/><path d="M16.200 19.800L21 17.500l-5.600-1.300z" fill="#eef6f7"/></svg>
<!-- indicators -->
<div class="ind" style="left:366px;width:27px"></div>
<div class="ind" style="left:473px;width:27px"></div>
<div class="ind" style="left:509px;width:27px"></div>
<div class="ind" style="left:580px;width:27px"></div>
<div class="ind" style="left:616px;width:27px"></div>
<div class="ind" style="left:651px;width:27px"></div>
<div class="ind" style="left:687px;width:26px"></div>
<div class="ind" style="left:722px;width:26px"></div>
<div class="ind" style="left:757px;width:26px"></div>
<div class="ind" style="left:792px;width:25px"></div>
<div class="ind" style="left:822px;width:35px"></div>
<!-- overflow arrows -->
<div style="left:858px;top:0;width:17px;height:39px;background:#f0f0f0"></div>
<svg style="left:862px;top:6px" width="9" height="6" viewBox="0 0 9 6" fill="none" stroke="#333" stroke-width="1.400"><path d="M.7 5.300L4.500 1.200l3.800 4.100"/></svg>
<svg style="left:862px;top:28px" width="9" height="6" viewBox="0 0 9 6" fill="none" stroke="#333" stroke-width="1.400"><path d="M.7.700L4.500 4.800 8.300.7"/></svg>
<span class="t" style="left:883px;top:14px;font-size:11.200px;color:#e6e6e6">Desktop</span>
<svg style="left:931px;top:6.500px" width="8" height="6.500" viewBox="0 0 8 7" fill="none" stroke="#fff" stroke-width="1.400"><path d="M.5.500L3.500 3.500.5 6.500M4.500.500l3 3-3 3"/></svg>
<!-- weather -->
<svg style="left:958px;top:8px" width="28" height="25" viewBox="0 0 28 25"><path d="M0 5h3.200v16H0z" fill="#2e9be6"/><path d="M.4 7h2.400M.4 10h2.400M.4 13h2.400M.4 16h2.400M.4 19h2.400" stroke="#444" stroke-width=".8"/><path d="M14.500 1c3 5 7 9.500 7 14.500 0 4.200-3 7.500-7 7.500s-7-3.300-7-7.500c0-5 4-9.500 7-14.500z" fill="#29a5ea"/></svg>
<span class="t" style="left:987.500px;top:12.500px;font-size:12.600px;color:#fff">Very...</span>
<!-- tray -->
<svg style="left:1046px;top:16px" width="12" height="7" viewBox="0 0 12 7" fill="none" stroke="#fff" stroke-width="1.200"><path d="M.6 6.400L6 .9l5.400 5.500"/></svg>
<svg style="left:1066px;top:12px" width="17" height="14" viewBox="0 0 17 14"><path d="M4 12.500c-2 0-3.500-1.300-3.500-3.200 0-1.700 1.200-3 2.900-3.200C4 3.800 6 2.300 8.300 2.300c2.300 0 4.200 1.400 4.900 3.400 1.900.1 3.300 1.500 3.300 3.300 0 2-1.500 3.500-3.500 3.500z" fill="#8d8d8d"/><path d="M2.500 1l12 12" stroke="#cfcfcf" stroke-width="1.300"/></svg>
<svg style="left:1090px;top:14px" width="16" height="10" viewBox="0 0 16 10"><rect x=".6" y=".6" width="13" height="8.800" rx="1" fill="none" stroke="#fff" stroke-width="1.200"/><rect x="2.200" y="2.200" width="9.800" height="5.600" fill="#fff"/><rect x="14.200" y="3" width="1.500" height="4" fill="#fff"/></svg>
<svg style="left:1112px;top:11px" width="17" height="16" viewBox="0 0 17 16" fill="none" stroke="#fff" stroke-width="1.100"><path d="M.8 5.500h2.700l3.500-3.500v12l-3.500-3.500H.8z"/><path d="M9.500 5.500c1 .7 1 4.300 0 5M11.500 3.500c2 1.800 2 7.200 0 9M13.500 1.500c3 3 3 10 0 13"/></svg>
<span class="t" style="left:1136.200px;top:13.800px;font-size:10.700px;letter-spacing:-.3px;color:#fff">ENG</span>
<span class="t" style="left:1177px;top:5.500px;font-size:11px;color:#fff">2:27 PM</span>
<span class="t" style="left:1169.500px;top:22px;font-size:11.100px;color:#fff">29/01/2025</span>
<svg style="left:1240px;top:9px" width="30" height="26" viewBox="0 0 30 26"><path d="M2 2h14v11H7l-3 3v-3H2z" fill="#fff"/><path d="M4.500 5h9M4.500 7.500h9M4.500 10h9" stroke="#444" stroke-width=".9"/><circle cx="16" cy="16" r="8" fill="#444" stroke="#fff" stroke-width="1"/><text x="16" y="20" font-family="Liberation Sans,sans-serif" font-size="11.500" letter-spacing="-.4" fill="#fff" text-anchor="middle">22</text></svg>
</div>

</div>
</body>
</html>
